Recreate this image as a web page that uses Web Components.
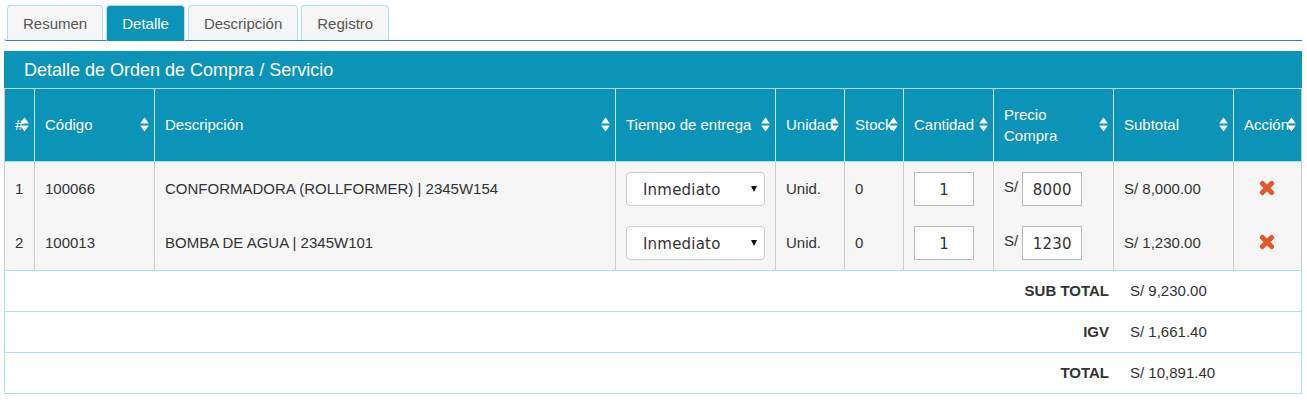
<!DOCTYPE html>
<html lang="es"><head><meta charset="utf-8"><title>Detalle</title>
<style>
html,body{margin:0;background:#fff;font:15px/20px "Liberation Sans",Arial,sans-serif;color:#333}
body{padding:5px 5px 0 4px;width:1298px;overflow:hidden}
</style></head><body>
<tab-bar>
  <tab-item>Resumen</tab-item><tab-item active>Detalle</tab-item><tab-item>Descripción</tab-item><tab-item>Registro</tab-item>
</tab-bar>
<order-panel title-text="Detalle de Orden de Compra / Servicio">
  <order-row head>
    <order-cell sort>#</order-cell><order-cell sort>Código</order-cell><order-cell sort>Descripción</order-cell><order-cell sort>Tiempo de entrega</order-cell><order-cell sort>Unidad</order-cell><order-cell sort>Stock</order-cell><order-cell sort>Cantidad</order-cell><order-cell sort tight>Precio<br>Compra</order-cell><order-cell sort>Subtotal</order-cell><order-cell sort>Acción</order-cell>
  </order-row>
  <order-row>
    <order-cell>1</order-cell><order-cell>100066</order-cell><order-cell>CONFORMADORA (ROLLFORMER) | 2345W154</order-cell><order-cell><delivery-select></delivery-select></order-cell><order-cell>Unid.</order-cell><order-cell>0</order-cell><order-cell><qty-box value="1"></qty-box></order-cell><order-cell><price-box value="8000"></price-box></order-cell><order-cell>S/ 8,000.00</order-cell><order-cell center><remove-icon></remove-icon></order-cell>
  </order-row>
  <order-row>
    <order-cell>2</order-cell><order-cell>100013</order-cell><order-cell>BOMBA DE AGUA | 2345W101</order-cell><order-cell><delivery-select></delivery-select></order-cell><order-cell>Unid.</order-cell><order-cell>0</order-cell><order-cell><qty-box value="1"></qty-box></order-cell><order-cell><price-box value="1230"></price-box></order-cell><order-cell>S/ 1,230.00</order-cell><order-cell center><remove-icon></remove-icon></order-cell>
  </order-row>
  <total-row label="SUB TOTAL" first>S/ 9,230.00</total-row>
  <total-row label="IGV">S/ 1,661.40</total-row>
  <total-row label="TOTAL">S/ 10,891.40</total-row>
</order-panel>
<script>
function def(name, html, init){
  customElements.define(name, class extends HTMLElement{
    constructor(){super();this.attachShadow({mode:'open'}).innerHTML=html;}
    connectedCallback(){if(init)init(this);}
  });
}
def('tab-bar',`<style>
:host{display:flex;gap:5px;height:35px;padding-left:4px;border-bottom:1px solid #337ab7;border-bottom-left-radius:3px}
</style><slot></slot>`);
def('tab-item',`<style>
:host{display:block;box-sizing:border-box;height:35px;padding:8px 15px 0;border:1px solid #a9e1f3;border-bottom:0;border-radius:4px 4px 0 0;background:#f6f6f6;color:#555;line-height:20px;margin:0 -1px}
:host([active]){height:36px;background:#0c93b8;color:#fff}
</style><slot></slot>`);
def('order-panel',`<style>
:host{display:block;margin-top:10px;--cols:29px 120px 461px 160px 69px 59px 90px 120px 120px 68px}
h2{margin:0;height:38px;box-sizing:border-box;background:#0c93b8;color:#fff;font:18px/38px "Liberation Sans",Arial,sans-serif;padding-left:20px;border-bottom:1px solid #a9e1f3}
</style><h2></h2><slot></slot>`,el=>{el.shadowRoot.querySelector('h2').textContent=el.getAttribute('title-text');});
def('order-row',`<style>
:host{display:grid;grid-template-columns:var(--cols);height:54px;background:#f6f6f6;border-left:1px solid #ccc;border-right:1px solid #ccc;box-sizing:border-box}
:host([head]){height:73px;background:#0c93b8;color:#fff;border-bottom:1px solid #a9e1f3;border-top:0}
</style><slot></slot>`);
def('order-cell',`<style>
:host{display:flex;align-items:center;position:relative;box-sizing:border-box;padding:0 10px;border-left:1px solid #ccc;white-space:nowrap;line-height:22px}
:host(:first-child){border-left:0}
:host([center]){justify-content:center;padding:0}
:host([tight]){line-height:21px}
:host-context(order-row[head]){border-left-color:#c8e4ec}
.s{display:none;position:absolute;right:5px;top:50%;margin-top:-8px;width:9px;height:15px}
:host([sort]) .s{display:block}
</style><div><slot></slot></div>
<svg class="s" viewBox="0 0 9 15"><path d="M4.5 0.5 8.8 6.5H.2Z M4.5 14.5 .2 8.5H8.8Z" fill="#fff"/></svg>`);
const inputFont=`font:15px "DejaVu Sans",Verdana,sans-serif;color:#333;letter-spacing:.2px;`;
def('delivery-select',`<style>
:host{display:block;position:relative;width:139px;height:34px}
select{appearance:none;-webkit-appearance:none;width:100%;height:100%;box-sizing:border-box;border:1px solid #ccc;border-radius:4px;background:#fff;padding:1px 0 0 16px;${inputFont}}
i{position:absolute;right:8px;top:14px;border:3px solid transparent;border-top:6px solid #111;border-bottom:0;pointer-events:none}
</style><select><option>Inmediato</option></select><i></i>`);
const inputBox=`input{box-sizing:border-box;width:60px;height:34px;border:1px solid #bbb;background:#fff;text-align:center;padding:1px 0 0;margin:0;${inputFont}}`;
def('qty-box',`<style>:host{display:block;height:34px}${inputBox}</style><input>`,el=>{el.shadowRoot.querySelector('input').value=el.getAttribute('value');});
def('price-box',`<style>:host{display:flex;gap:4px;height:34px}span{padding-top:4px}${inputBox}</style><span>S/</span><input>`,el=>{el.shadowRoot.querySelector('input').value=el.getAttribute('value');});
def('remove-icon',`<style>:host{display:block;width:16px;height:16px;margin:0 2px 2px 0}svg{display:block}</style>
<svg viewBox="0 0 16 16" width="16" height="16"><path d="M3.4 3.4 12.6 12.6M12.6 3.4 3.4 12.6" fill="none" stroke="#e2582a" stroke-linecap="round" stroke-width="5"/></svg>`);
def('total-row',`<style>
:host{display:grid;grid-template-columns:1104px 1fr;align-items:center;box-sizing:border-box;height:41px;border:1px solid #a9e1f3;border-top:0;padding-top:0}
:host([first]){height:42px;border-top:1px solid #a9e1f3}
b{text-align:right}
span{padding-left:21px}
</style><b></b><span><slot></slot></span>`,el=>{el.shadowRoot.querySelector('b').textContent=el.getAttribute('label');});
</script>
</body></html>
